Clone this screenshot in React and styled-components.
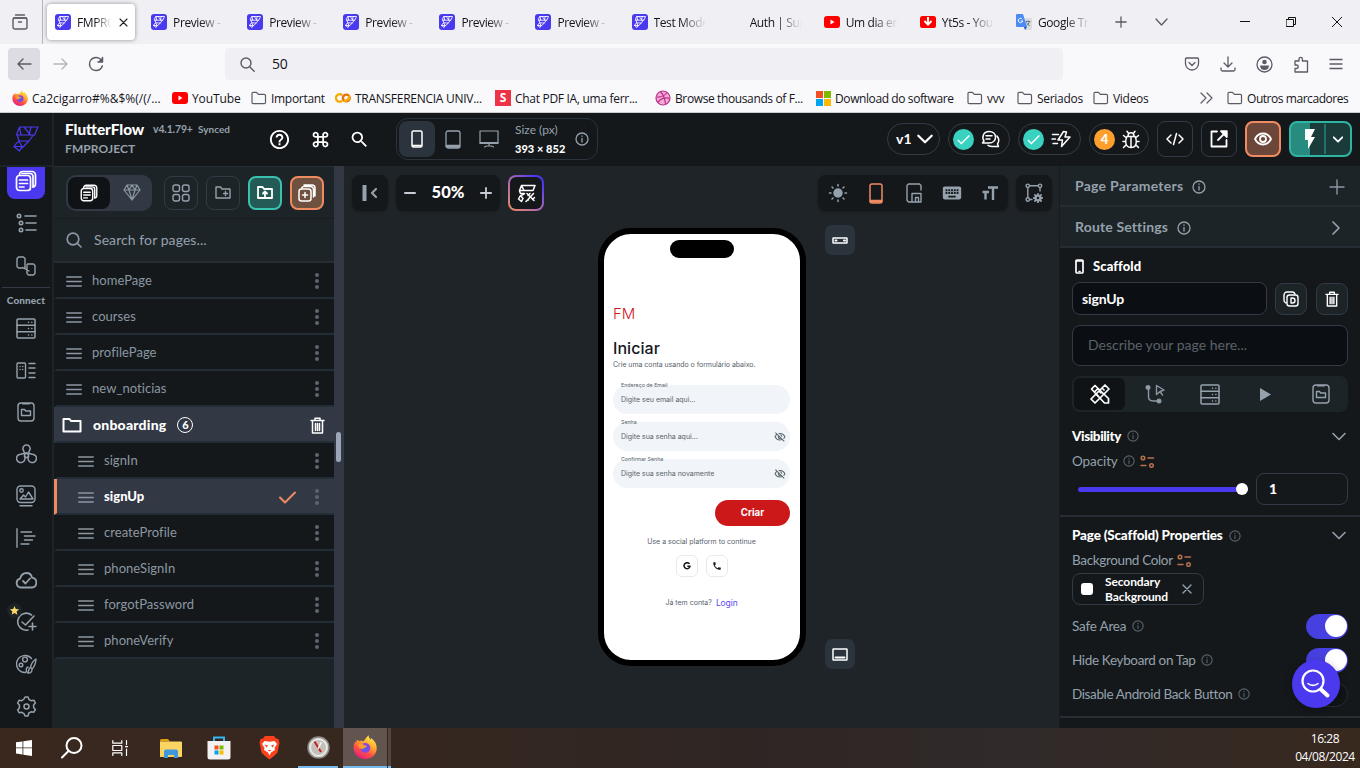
import React from "react";
import styled, { createGlobalStyle, css } from "styled-components";
import {
  MdSearch, MdHelpOutline, MdKeyboardCommandKey, MdKeyboard, MdPhone,
  MdOutlineVisibilityOff, MdCheck, MdFlashOn, MdStar,
} from "react-icons/md";

const ui = `"Open Sans", "Noto Sans", sans-serif`;
const app = `Lato, "Open Sans", sans-serif`;
const mobile = `Inter, Roboto, sans-serif`;

const c = {
  ink: "#14181b",
  panel: "#1d2428",
  line: "#262d34",
  edge: "#323b45",
  slate: "#323945",
  grey: "#95a1ac",
  dim: "#57636c",
  violet: "#4b39ef",
  orange: "#ee8b60",
  teal: "#39d2c0",
};

const Global = createGlobalStyle`
  * { box-sizing: border-box; }
  body { margin: 0; overflow: hidden; font-family: ${app}; }
  svg { display: block; flex: none; }
`;

const Screen = styled.div`
  width: 1360px;
  height: 768px;
  display: flex;
  flex-direction: column;
  overflow: hidden;
  background: ${c.ink};
`;

const Label = styled.span`
  width: ${(p) => (p.$w ? p.$w + "px" : "auto")};
  font-family: ${(p) => p.$family || app};
  font-size: ${(p) => p.$size || 13}px;
  font-weight: ${(p) => p.$weight || 400};
  color: ${(p) => p.$color || c.grey};
  letter-spacing: ${(p) => p.$track || 0}px;
  line-height: ${(p) => p.$lh || 1.2};
  white-space: nowrap;
`;

/* Stroked drawing on its own grid; every icon below is built on it. */
function Draw({ w = 20, h, box, color = c.grey, sw = 1.5, children }) {
  const hh = h || w;
  return (
    <svg width={w} height={hh} viewBox={box || `0 0 ${w} ${hh}`} fill="none" stroke={color}
      strokeWidth={sw} strokeLinecap="round" strokeLinejoin="round">
      {children}
    </svg>
  );
}

const Info = ({ s = 12, color = c.dim }) => (
  <Draw w={s} box="0 0 14 14" color={color} sw={1.3}>
    <circle cx="7" cy="7" r="6" /><path d="M7 6.4v3.6M7 4v.3" />
  </Draw>
);
const Chevron = ({ w = 14, color = c.grey, sw = 1.6 }) => (
  <Draw w={w} h={w / 2 + 2} box="0 0 14 9" color={color} sw={sw}><path d="M1 1.5l6 6 6-6" /></Draw>
);

/* ---------- browser ---------- */
const TabStrip = styled.div`
  height: 44px;
  flex: none;
  display: flex;
  background: #f0f0f4;
`;
const RecentButton = styled.div`
  width: 43px;
  padding-right: 3px;
  border-right: 1px solid #b5b5bb;
  display: flex;
  align-items: center;
  justify-content: center;
`;
const Tab = styled.div`
  width: 96.1px;
  padding: 4px;
  flex: none;
`;
const TabBody = styled.div`
  height: 36px;
  display: flex;
  align-items: center;
  gap: 6px;
  padding-left: 8px;
  border-radius: 4px;
  ${(p) => p.$active && css`
    background: #fff;
    box-shadow: 0 0 4px rgba(0, 0, 0, 0.4);
  `}
`;
const TabTitle = styled.span`
  width: ${(p) => (p.$short ? 36 : 54)}px;
  overflow: hidden;
  white-space: nowrap;
  font: 12px ${ui};
  letter-spacing: -0.4px;
  color: #15141a;
  mask-image: linear-gradient(to right, #000 50%, transparent 96%);
`;
const Slot = styled.div`
  width: 16px;
  height: 16px;
  flex: none;
  display: grid;
  place-items: center;
`;
const TabTools = styled.div`
  flex: 1;
  display: flex;
  align-items: center;
  gap: 28px;
  padding-left: 15px;
`;
const WindowButtons = styled.div`
  margin-left: auto;
  margin-right: 18px;
  display: flex;
  align-items: center;
  gap: 36px;
`;
const NavBar = styled.div`
  height: 40px;
  flex: none;
  background: #f9f9fb;
  display: flex;
  align-items: center;
  padding: 0 17px 0 8px;
`;
const NavButton = styled.div`
  width: 32px;
  height: 32px;
  margin-right: 4px;
  border-radius: 4px;
  display: grid;
  place-items: center;
  background: ${(p) => (p.$on ? "#dcdce2" : "transparent")};
`;
const UrlBox = styled.div`
  width: 838px;
  height: 32px;
  margin-left: 109px;
  border-radius: 4px;
  background: #f0f0f4;
  display: flex;
  align-items: center;
  gap: 17px;
  padding-left: 15px;
`;
const NavTools = styled.div`
  margin-left: auto;
  display: flex;
  align-items: center;
  gap: 20.3px;
`;
const BookmarkBar = styled.div`
  height: 29px;
  flex: none;
  background: #f9f9fb;
  border-bottom: 1px solid #cccccf;
  display: flex;
  align-items: center;
  padding: 0 12px 0 12px;
`;
const Bookmark = styled.div`
  width: ${(p) => (p.$w ? p.$w + "px" : "auto")};
  flex: none;
  display: flex;
  align-items: center;
  gap: 4px;
`;
const BookmarkText = styled.span`
  font: 12px ${ui};
  letter-spacing: ${(p) => p.$track ?? -0.3}px;
  color: #15141a;
  white-space: nowrap;
`;

const FlowMark = ({ color = "#fff", w = 12 }) => (
  <Draw w={w} box="-1 -1 26 26" color={color} sw={w < 16 ? 1.9 : 1.2}>
    <path d="M5.500 0H24l-3.500 8H2.500zM10 0l6.500 8M5.500 0L7 8M17 0l-2 8M3.500 8.500L5 14h10l4-5.500M3 15.500l-3 4L5.500 24 8 19.500 5 14.500zM14.500 14.500L8 21M0 19.500l8 0" />
  </Draw>
);
const FlowTile = styled.div`
  width: 16px;
  height: 16px;
  border-radius: 3px;
  background: #4b39ef;
  display: grid;
  place-items: center;
`;
const FlowIcon = () => <FlowTile><FlowMark /></FlowTile>;
const YouTube = () => (
  <svg width="16" height="12" viewBox="0 0 16 12"><rect width="16" height="12" rx="3" fill="#f00" /><path d="M6.500 3.500v5l4-2.500z" fill="#fff" /></svg>
);
const Yt5s = () => (
  <svg width="16" height="12" viewBox="0 0 16 12"><rect width="16" height="12" rx="2.500" fill="#f00" /><path d="M8 1v6M4.500 5L8 8.500 11.500 5" stroke="#fff" strokeWidth="2" fill="none" /></svg>
);
const Translate = () => (
  <svg width="16" height="16" viewBox="0 0 16 16">
    <path d="M6 4h9a1 1 0 011 1v10a1 1 0 01-1 1H9z" fill="#dadce0" />
    <path d="M9.500 7.500h5M12 6.500v1M13.500 7.500c-.5 2-2 3.500-3 4M10.500 8.500c.7 1.500 2 2.700 3.200 3.200" stroke="#607988" fill="none" />
    <path d="M1 0h6l4 13H1a1 1 0 01-1-1V1a1 1 0 011-1z" fill="#4c8bf5" />
    <path d="M8 13h3l-2 3z" fill="#1a56c4" />
    <path d="M6.300 5.200A2.200 2.200 0 106.700 7H4.800" stroke="#fff" fill="none" />
  </svg>
);
const Firefox = ({ s = 16 }) => (
  <svg width={s} height={s} viewBox="0 0 24 24">
    <defs>
      <linearGradient id={"fx" + s} x1="0.8" y1="0" x2="0.25" y2="1">
        <stop offset="0" stopColor="#fff44f" /><stop offset="0.35" stopColor="#ffb02e" />
        <stop offset="0.65" stopColor="#ff5540" /><stop offset="1" stopColor="#e31587" />
      </linearGradient>
      <radialGradient id={"fp" + s}><stop offset="0.3" stopColor="#5b5bea" /><stop offset="1" stopColor="#9b3fd8" /></radialGradient>
    </defs>
    <path d="M4 5c1 0 1.500.5 2 1.200C8 5.500 9.500 5.800 10.500 6.200 12 5 13 2.500 15.500.3c.2 2 1 3 2.500 4.500 0-1 0-1.500-.2-2C22 6 24 9.500 23.700 14 23.300 20 18.200 24 12.500 24 6 24 .5 19.500.5 12.500.5 10 1.500 7.500 2.800 6L3 8z" fill={`url(#fx${s})`} />
    <circle cx="12.300" cy="13" r="5" fill={`url(#fp${s})`} />
    <path d="M5 10c2-2.500 4.500-1.500 6 .2 1.500.3 2.500.3 3 .8-1 2-3 1.500-4 3-2.500 0-4.500-1-5-4z" fill="#ff9a2e" />
  </svg>
);
const Folder = () => (
  <Draw w={16} h={14} color="#5b5b66" sw={1.2}><path d="M1 11.500V2.300a1 1 0 011-1h3.500l1.800 2h6a1.200 1.200 0 011.200 1.200v7a1.200 1.200 0 01-1.200 1.200H2.200A1.200 1.200 0 011 11.500z" /></Draw>
);
const Colab = () => (
  <svg width="16" height="12" viewBox="0 0 16 12" fill="none" strokeWidth="2.400">
    <path d="M7.200 3.300a3.700 3.700 0 100 5.400" stroke="#f9ab00" /><circle cx="11.300" cy="6" r="3.400" stroke="#e8710a" /><path d="M8.700 8.400a3.700 3.700 0 005-4.700" stroke="#f9ab00" />
  </svg>
);
const LetterTile = styled.div`
  width: 16px;
  height: 16px;
  background: #ef3347;
  color: #fff;
  font: 700 12px/16px ${ui};
  text-align: center;
`;
const Dribbble = () => (
  <svg width="16" height="16" viewBox="0 0 16 16" fill="#f5a9d8" stroke="#b8358a" strokeWidth="1.200">
    <circle cx="8" cy="8" r="7" /><path fill="none" d="M1.500 7c4 .3 8-1 10.500-4.500M5.500 1.500c3 3.500 4.500 7.500 5 12.500M3 12.500C5 8.500 10 7 14.800 8.500" />
  </svg>
);
const FourSquares = ({ s = 15 }) => (
  <svg width={s} height={s} viewBox="0 0 15 15">
    <rect width="7" height="7" fill="#f25022" /><rect x="8" width="7" height="7" fill="#7fba00" />
    <rect y="8" width="7" height="7" fill="#00a4ef" /><rect x="8" y="8" width="7" height="7" fill="#ffb900" />
  </svg>
);

const tabs = [
  ["FMPROJ", FlowIcon], ["Preview -", FlowIcon], ["Preview -", FlowIcon], ["Preview -", FlowIcon],
  ["Preview -", FlowIcon], ["Preview - I", FlowIcon], ["Test Mode", FlowIcon], ["Auth | Sup", null],
  ["Um dia em", YouTube], ["Yt5s - You", Yt5s], ["Google Tra", Translate],
];
const marks = [
  ["Ca2cigarro#%&$%(/(/...", Firefox, 160, 0], ["YouTube", YouTube, 79, -0.1], ["Important", Folder, 84],
  ["TRANSFERENCIA UNIV...", Colab, 160, -0.27], ["Chat PDF IA, uma ferr...", () => <LetterTile>S</LetterTile>, 160, -0.3],
  ["Browse thousands of F...", Dribbble, 160, -0.38], ["Download do software", FourSquares, 152, -0.4],
  ["vvv", Folder, 50, -0.3], ["Seriados", Folder, 76], ["Videos", Folder, 106],
];

function Browser() {
  const g = "#5b5b66";
  return (
    <>
      <TabStrip>
        <RecentButton>
          <Draw w={16} color={g} sw={1.4}><path d="M3.500 1h9" /><path d="M1.500 4h13" /><rect x="1" y="4" width="14" height="11" rx="2" /><path d="M6.500 8h3" /></Draw>
        </RecentButton>
        {tabs.map(([title, Icon], i) => (
          <Tab key={i}>
            <TabBody $active={i === 0}>
              <Slot>{Icon && <Icon />}</Slot>
              <TabTitle $short={i === 0}>{title}</TabTitle>
              {i === 0 && <Draw w={9} color="#222" sw={1.1}><path d="M1 1l7 7M8 1L1 8" /></Draw>}
            </TabBody>
          </Tab>
        ))}
        <TabTools>
          <Draw w={12} color={g} sw={1.3}><path d="M6 .8v10.400M.8 6h10.400" /></Draw>
          <Draw w={13} h={8} color={g} sw={1.3}><path d="M1 1l5.500 6L12 1" /></Draw>
          <WindowButtons>
            <Draw w={10} h={10} color="#111" sw={1}><path d="M0 4.500h10" /></Draw>
            <Draw w={10} h={10} color="#111" sw={1}><path d="M.5 2.500h7v7h-7zM2.500 2.500v-2h7v7h-2" /></Draw>
            <Draw w={10} h={10} color="#111" sw={1}><path d="M0 0l10 10M10 0L0 10" /></Draw>
          </WindowButtons>
        </TabTools>
      </TabStrip>
      <NavBar>
        <NavButton $on><Draw w={15} h={12} color={g} sw={1.4}><path d="M1 6h13M6 1L1 6l5 5" /></Draw></NavButton>
        <NavButton><Draw w={15} h={12} color="#b5b5bb" sw={1.4}><path d="M1 6h13M9 1l5 5-5 5" /></Draw></NavButton>
        <NavButton><Draw w={16} color={g} sw={1.5}><path d="M14 5.500A6.500 6.500 0 108 14.500c3 0 5.500-2 6.300-4.500" /><path d="M14.500 1.500v4.500H10" fill={g} /></Draw></NavButton>
        <UrlBox>
          <Draw w={15} color={g} sw={1.4}><circle cx="6" cy="6" r="5" /><path d="M9.700 9.700l4.500 4.500" /></Draw>
          <Label $family={ui} $size={14} $color="#15141a" $track={-0.3}>50</Label>
        </UrlBox>
        <NavTools>
          <Draw w={16} color={g} sw={1.3}><path d="M1.500 3a1 1 0 011-1h11a1 1 0 011 1v4.500a6.500 6.500 0 01-13 0z" /><path d="M5 6.500l3 3 3-3" /></Draw>
          <Draw w={16} color={g} sw={1.3}><path d="M8 .8v10M4 7l4 4 4-4M1 12v1.500a1.500 1.500 0 001.500 1.500h11a1.500 1.500 0 001.500-1.500V12" /></Draw>
          <Draw w={17} color={g} sw={1.3}><circle cx="8.500" cy="8.500" r="7.500" /><circle cx="8.500" cy="6" r="2.300" fill={g} stroke="none" /><path fill={g} stroke="none" d="M4 9.500h9c0 3-2 4.500-4.500 4.500S4 12.500 4 9.500z" /></Draw>
          <Draw w={15} h={17} color={g} sw={1.3}><path d="M1 5h4V3a1.700 1.700 0 013.400 0v2H13.500v11H1v-3.500h1.500a1.700 1.700 0 000-3.500H1z" /></Draw>
          <Draw w={14} h={12} color={g} sw={1.3}><path d="M1 1.500h12M1 6h12M1 10.500h12" /></Draw>
        </NavTools>
      </NavBar>
      <BookmarkBar>
        {marks.map(([text, Icon, w, track]) => (
          <Bookmark key={text} $w={w}><Slot><Icon /></Slot><BookmarkText $track={track}>{text}</BookmarkText></Bookmark>
        ))}
        <Bookmark $w={28}><Draw w={14} h={12} color={g} sw={1.2}><path d="M2 1l5 5-5 5M8 1l5 5-5 5" /></Draw></Bookmark>
        <Bookmark><Slot><Folder /></Slot><BookmarkText $track={-0.45}>Outros marcadores</BookmarkText></Bookmark>
      </BookmarkBar>
    </>
  );
}

/* ---------- builder header ---------- */
const Header = styled.header`
  height: 53px;
  flex: none;
  display: flex;
  align-items: center;
  padding-bottom: 1px;
  background: ${c.ink};
`;
const LogoCell = styled.div`
  width: 54px;
  height: 53px;
  padding-bottom: 0;
  border-right: 2px solid ${c.panel};
  border-bottom: 1px solid ${c.panel};
  display: grid;
  place-items: center;
`;
const Title = styled.div`
  width: 205px;
  padding-left: 11px;
  display: flex;
  flex-direction: column;
  gap: 3px;
`;
const TitleRow = styled.div`
  display: flex;
  align-items: center;
  height: 17px;
`;
const HeaderIcons = styled.div`
  display: flex;
  align-items: center;
  gap: 18.500px;
  width: 127px;
  padding-left: 9px;
  color: #fff;
`;
const DeviceBox = styled.div`
  width: 202px;
  height: 42px;
  border: 1px solid #2b343c;
  border-radius: 12px;
  display: flex;
  align-items: center;
  padding-left: 2px;
  margin-left: 10px;
`;
const Device = styled.div`
  width: 36px;
  height: 36px;
  border-radius: 8px;
  display: grid;
  place-items: center;
  background: ${(p) => (p.$on ? "#2b343c" : "transparent")};
`;
const SizeText = styled.div`
  width: 60px;
  margin-left: 8px;
  display: flex;
  flex-direction: column;
  gap: 4px;
`;
const Actions = styled.div`
  margin-left: auto;
  margin-right: 8px;
  display: flex;
  align-items: center;
  gap: 8px;
`;
const Pill = styled.div`
  width: ${(p) => p.$w}px;
  height: 32px;
  border: 1px solid ${c.edge};
  border-radius: 16px;
  display: flex;
  align-items: center;
  padding-left: ${(p) => p.$pad ?? 4}px;
  gap: ${(p) => p.$gap ?? 6.5}px;
`;
const Dot = styled.div`
  width: 21px;
  height: 21px;
  border-radius: 50%;
  background: ${(p) => p.$bg};
  color: #fff;
  font: 900 13px/21px ${app};
  display: grid;
  place-items: center;
`;
const Square = styled.div`
  width: ${(p) => p.$w || 36}px;
  height: ${(p) => p.$w || 36}px;
  border: ${(p) => (p.$accent ? 2 : 1)}px solid ${(p) => p.$line || c.edge};
  border-radius: 8px;
  background: ${(p) => p.$bg || "transparent"};
  display: grid;
  place-items: center;
  color: #fff;
`;
const RunButton = styled.div`
  width: 63px;
  height: 36px;
  border: 2px solid #2fb5a4;
  border-radius: 8px;
  background: linear-gradient(to right, #288b7f 19px, #1b3a3a 19px);
  display: flex;
  align-items: center;
  color: #fff;
`;
const RunHalf = styled.div`
  width: ${(p) => p.$w}px;
  height: 30px;
  padding-left: ${(p) => p.$pad || 0}px;
  display: grid;
  place-items: center;
  border-right: ${(p) => (p.$split ? "2px solid #22746b" : "0")};
`;

function TopHeader() {
  return (
    <Header>
      <LogoCell><FlowMark color="#4b39ef" w={26} /></LogoCell>
      <Title>
        <TitleRow>
          <Label $size={15.3} $weight={900} $color="#fff" $w={88}>FlutterFlow</Label>
          <Label $size={10.5} $weight={700} $track={-0.15} $w={45}>v4.1.79+</Label>
          <Label $size={10} $weight={700}>Synced</Label>
        </TitleRow>
        <TitleRow><Label $size={12} $weight={700} $track={0.1}>FMPROJECT</Label></TitleRow>
      </Title>
      <HeaderIcons><MdHelpOutline size={23} /><MdKeyboardCommandKey size={21} /><MdSearch size={21} /></HeaderIcons>
      <DeviceBox>
        <Device $on><Draw w={12} h={18} color="#fff"><rect x="1" y="1" width="10" height="16" rx="1.500" /><path d="M1.500 15.500h9" sw={2} /></Draw></Device>
        <Device><Draw w={16} h={19} color={c.grey} sw={1.3}><rect x="1" y="1" width="14" height="17" rx="2" /><path d="M1.500 15.500h13v1.500h-13z" fill={c.grey} /></Draw></Device>
        <Device><Draw w={20} h={18} color={c.grey} sw={1.2}><rect x="1" y="1" width="18" height="12.500" /><path d="M1 12.500h18M10 13.500v2M5.500 17l2-1h5l2 1" /></Draw></Device>
        <SizeText>
          <Label $size={12}>Size (px)</Label>
          <Label $size={11} $weight={900} $color="#fff" $track={0.05}>393 × 852</Label>
        </SizeText>
        <Info s={14} color={c.grey} />
      </DeviceBox>
      <Actions>
        <Pill $w={53} $pad={8} $gap={5}><Label $size={14} $color="#fff" $weight={700}>v1</Label><Chevron w={16} color="#fff" sw={2} /></Pill>
        <Pill $w={62}>
          <Dot $bg={c.teal}><MdCheck size={17} /></Dot>
          <Draw w={19} color="#fff"><path d="M8 1.500c4 0 6.500 2.500 6.500 5.700S12 13 8 13H1.500L3 11C.5 7 2.500 1.500 8 1.500zM5 5.700h6M5 9h4" /><path d="M16 6c2.500 3 1.500 6.500.5 8l1 2.500H12c-2 .1-3.700-.4-5-1.200" /></Draw>
        </Pill>
        <Pill $w={63}>
          <Dot $bg={c.teal}><MdCheck size={17} /></Dot>
          <Draw w={20} h={18} color="#fff"><path d="M12.500 1.500L7 10h4.500L10.500 16.500 19 7h-5l1.500-5zM1.500 4.500h6M1 9h3.500M2 13.500h4.500" /></Draw>
        </Pill>
        <Pill $w={60}>
          <Dot $bg="#ff9f2e">4</Dot>
          <Draw w={18} h={19} color="#fff"><path d="M5 6.500h8c1 1.500 1.300 3 1.300 5 0 4-2.300 6-5.300 6s-5.300-2-5.300-6c0-2 .3-3.500 1.300-5zM9 7v10M6 6.500C6 1.500 12 1.500 12 6.500M6.300 3L5 1.300M11.700 3L13 1.300M1 11.500h2.700M14.300 11.500H17M4 7.500L1.500 5.500M14 7.500l2.500-2M4 15l-2.500 2.500M14 15l2.500 2.500" /></Draw>
        </Pill>
        <Square><Draw w={18} h={14} color="#fff"><path d="M5 3L1 7l4 4M13 3l4 4-4 4M10.500 1.500l-3 11" /></Draw></Square>
        <Square><Draw w={18} color="#fff" sw={1.8}><path d="M7 1.500H1.500v15h15V10" /><path d="M8 10l8-8" /><path d="M11 1.200h5.800V7z" fill="#fff" /></Draw></Square>
        <Square $accent $line="#ee8b60" $bg="#6b4639"><Draw w={18} h={14} color="#fff" sw={1.8}><path d="M1 7c2-4 5-5.500 8-5.500S15 3 17 7c-2 4-5 5.500-8 5.500S3 11 1 7z" /><circle cx="9" cy="7" r="3" /></Draw></Square>
        <RunButton><RunHalf $w={35} $pad={4} $split><MdFlashOn size={24} /></RunHalf><RunHalf $w={24}><Chevron w={10} color="#fff" sw={2.6} /></RunHalf></RunButton>
      </Actions>
    </Header>
  );
}

/* ---------- rail ---------- */
const Work = styled.div`
  height: 562px;
  flex: none;
  display: flex;
  overflow: hidden;
`;
const Rail = styled.nav`
  width: 52px;
  flex: none;
  background: ${c.ink};
  border-top: 1px solid ${c.panel};
  display: flex;
  flex-direction: column;
  align-items: center;
`;
const RailActive = styled.div`
  width: 38px;
  height: 32px;
  flex: none;
  border-radius: 0 0 8px 8px;
  background: ${c.violet};
  display: flex;
  justify-content: center;
  padding-top: 3px;
`;
const RailItem = styled.div`
  height: ${(p) => p.$h || 42}px;
  width: 52px;
  flex: none;
  position: relative;
  display: grid;
  place-items: center;
`;
const RailHead = styled.div`
  width: 48px;
  height: 20px;
  flex: none;
  margin-top: 2px;
  border-top: 1px solid ${c.edge};
  padding-top: 4px;
  text-align: center;
  line-height: 12px;
`;
const StarBadge = styled.div`
  position: absolute;
  left: 7px;
  top: 2px;
  width: 15px;
  height: 15px;
  border-radius: 50%;
  background: ${c.panel};
  color: #ffd866;
  display: grid;
  place-items: center;
`;

const PagesIcon = ({ w = 22, color = "#fff" }) => (
  <Draw w={w} box="0 0 22 22" color={color} sw={1.7}>
    <rect x="1.500" y="5.500" width="14" height="15" rx="3" /><path d="M4.500 5V4.500a3 3 0 013-3H17a3.500 3.500 0 013.500 3.500v9a3 3 0 01-2.500 3M4.500 10h8M4.500 13.500h8M4.500 17h4.500" /><path d="M7 3.500h8a3 3 0 013 3V17" />
  </Draw>
);
const DbIcon = () => (
  <Draw w={20} h={21}><rect x="1" y="1" width="18" height="19" rx="1" /><path d="M1 7.300h18M1 13.700h18M12.500 4.200h.1M15.800 4.200h.1M12.500 10.500h.1M15.800 10.500h.1M12.500 17h.1M15.800 17h.1" /></Draw>
);
const StorageIcon = () => (
  <Draw w={18} h={20} sw={1.4}><rect x="1" y="1" width="16" height="18" rx="3" /><path d="M5.500 1.800h7M4.500 13.500V7.500H7.500l1.200 1.500h4.800v4.500z" /></Draw>
);

const railIcons = [
  <DbIcon />,
  <Draw w={20} h={17} sw={1.4}><rect x="1" y="1" width="8.500" height="15" rx="1" /><path d="M4 4.500h.1M6.700 4.500h.1M4 7.500h.1M6.700 7.500h.1M13 1.500h6M13 6h6M13 11h6M13 15.500h6" /></Draw>,
  <StorageIcon />,
  <Draw w={21} h={21}><path d="M10.500 1a3.500 3.500 0 013 5.500L12.500 9h-4l-1-2.500A3.500 3.500 0 0110.500 1z" /><circle cx="10.500" cy="11.500" r="2" /><path d="M8.500 12.500a4.200 4.200 0 11-4-2.300l3.500-.7M12.500 12.500a4.200 4.200 0 104-2.300l-3.500-.7" /></Draw>,
  <Draw w={20} h={22} sw={1.4}><rect x="1" y="1" width="18" height="16.500" rx="3.500" /><circle cx="5.500" cy="5.500" r="1.700" /><path d="M4 14l3.500-4 2 2L12.500 7 17 14zM4 20.700h12" /></Draw>,
  <Draw w={20} h={20} sw={1.4}><path d="M1 .8v18.500M5 4h10.500M8.500 8h10.500M8.500 12h8M5 16h8" /></Draw>,
  <Draw w={22} h={17} sw={1.8}><path d="M5.500 15.500a4.500 4.500 0 01-.5-8.800C6.300 2.500 9 1 11.500 1c3 0 5 2 5.500 4.700 6 .7 5.500 9.300 0 9.800zM8 9l2.500 2.500L15 6.500" /></Draw>,
  <Draw w={21} h={20} sw={1.6}><path d="M15.500 3A8.500 8.500 0 1012 18M6 10l3.500 3L18 4M16.500 11v7M13 14.500h7" /></Draw>,
  <Draw w={21} h={20} sw={1.4}><path d="M15.500 4.500A8.500 8.500 0 109.500 18.500c1.500-.5 1-2 .7-3 0-1 .8-2 1.800-2.500" /><circle cx="9" cy="5.500" r="2.400" /><circle cx="5" cy="11" r="1.800" /><path d="M20 5c-3 2-5 5-5.500 8.500l1.800 1.300C18.500 12.500 19.700 9 20 5zM14 14c-1.500.5-1 3.500-2.500 4.800 2.500.7 4.800-.8 4.500-3.500" /></Draw>,
  <Draw w={21} h={21}><path d="M8 3l1-2h3l1 2.500 2 1.200 2.800-.5 1.600 2.600-1.800 2.200v2.500l1.800 2-1.600 2.700-2.700-.4-2.300 1.200L12 20H9l-1-2.400-2.200-1.300-2.700.4-1.500-2.700 1.800-2V9L1.600 7l1.500-2.700 2.700.4z" /><circle cx="10.500" cy="10.500" r="2.500" /></Draw>,
];

function SideRail() {
  return (
    <Rail>
      <RailActive><PagesIcon /></RailActive>
      <RailItem $h={48}>
        <Draw w={21} h={20} sw={1.6}><circle cx="3" cy="3" r="1.700" /><circle cx="5" cy="10" r="1.700" /><circle cx="5" cy="17" r="1.700" /><path d="M9 3h11M10 10h10M10 17h10" /></Draw>
      </RailItem>
      <RailItem $h={38}>
        <Draw w={20} h={20} sw={1.4}><path d="M7 12H2.500L1 10.500V2.500L2.500 1h5L9 2.500V12zM6.500 11.500L13 15M11.500 8h6L19 9.500v8L17.500 19h-5L11 17.500V8.500z" /></Draw>
      </RailItem>
      <RailHead><Label $size={10} $weight={900} $lh={1} $track={0.1}>Connect</Label></RailHead>
      {railIcons.map((icon, i) => (
        <RailItem key={i}>{icon}{i === 7 && <StarBadge><MdStar size={11} /></StarBadge>}</RailItem>
      ))}
    </Rail>
  );
}

/* ---------- page list ---------- */
const Pages = styled.aside`
  width: 282px;
  flex: none;
  border-left: 2px solid ${c.panel};
  border-top: 1px solid ${c.line};
  background: ${c.panel};
  display: flex;
  flex-direction: column;
`;
const PageTools = styled.div`
  height: 52px;
  border-bottom: 1px solid #171c1f;
  display: flex;
  align-items: center;
  gap: 8px;
  padding-left: 12px;
`;
const Switcher = styled.div`
  width: 86px;
  height: 36px;
  margin-right: 4px;
  border-radius: 10px;
  border: 2px solid ${c.slate};
  background: ${c.slate};
  display: flex;
`;
const Option = styled.div`
  width: ${(p) => (p.$on ? 42 : 43)}px;
  flex: none;
  border-radius: 8px;
  display: grid;
  place-items: center;
  background: ${(p) => (p.$on ? "#101315" : "transparent")};
`;
const SearchRow = styled.div`
  height: 44px;
  border-bottom: 2px solid ${c.line};
  display: flex;
  align-items: center;
  padding-left: 12px;
  gap: 12px;
`;
const Row = styled.div`
  height: 36px;
  flex: none;
  display: flex;
  align-items: center;
  background: ${(p) => (p.$lit ? c.slate : c.ink)};
  border-bottom: 2px solid #242d35;
  border-left: 3px solid ${(p) => (p.$current ? c.orange : p.$lit ? c.slate : c.ink)};
  padding: 2px ${(p) => (p.$folder ? 9 : 14)}px 0 ${(p) => (p.$folder ? 5 : p.$sub ? 21 : 9)}px;
  gap: ${(p) => (p.$folder ? 11 : 10)}px;
`;
const RowEnd = styled.div`
  margin-left: auto;
  display: flex;
  align-items: center;
  gap: 18px;
`;
const Count = styled.span`
  width: 16px;
  height: 16px;
  border: 1px solid #fff;
  border-radius: 50%;
  font: 900 11px/14px ${app};
  text-align: center;
  color: #fff;
`;
const Gutter = styled.div`
  width: 10px;
  flex: none;
  background: ${c.slate};
  padding: 266px 3px 0 2px;
`;
const Thumb = styled.div`
  height: 30px;
  border-radius: 3px;
  background: #9aa6b8;
`;

const Lines = () => <Draw w={16} h={11} color="#8b97a2" sw={1.6}><path d="M.8 1h14.400M.8 5.500h14.400M.8 10h14.400" /></Draw>;
const Dots = () => (
  <svg width="6" height="16" viewBox="0 0 6 16" fill="#5c6670"><circle cx="3" cy="2" r="2" /><circle cx="3" cy="8" r="2" /><circle cx="3" cy="14" r="2" /></svg>
);
const Trash = ({ w = 15 }) => (
  <Draw w={w} h={w + 2} box="0 0 15 17" color="#fff" sw={1.5}><path d="M1 3.500h13M5 3V1.200h5V3M2.500 4v12h10V4M5.500 6.500v7M7.500 6.500v7M9.500 6.500v7" /></Draw>
);

const pages = [
  { name: "homePage" }, { name: "courses" }, { name: "profilePage" }, { name: "new_noticias" },
  { name: "onboarding", folder: true },
  { name: "signIn", sub: true }, { name: "signUp", sub: true, current: true }, { name: "createProfile", sub: true },
  { name: "phoneSignIn", sub: true }, { name: "forgotPassword", sub: true }, { name: "phoneVerify", sub: true },
];

function PageList() {
  return (
    <>
      <Pages>
        <PageTools>
          <Switcher>
            <Option $on><PagesIcon w={18} /></Option>
            <Option><Draw w={18} h={17} color="#8b97a2" sw={1.2}><path d="M4 1h10l3 5-8 10L1 6zM1 6h16M6 6l3 10 3-10M4 1l2 5 3-5 3 5 2-5" /></Draw></Option>
          </Switcher>
          <Square $w={34}><Draw w={18} color={c.grey} sw={1.4}><rect x="1" y="1" width="6.500" height="6.500" rx="2" /><rect x="10.500" y="1" width="6.500" height="6.500" rx="2" /><rect x="1" y="10.500" width="6.500" height="6.500" rx="2" /><rect x="10.500" y="10.500" width="6.500" height="6.500" rx="2" /></Draw></Square>
          <Square $w={34}><Draw w={16} h={13} sw={1.4}><path d="M1 1h4.500L7 3h8v9H1zM10.500 5.500v4M8.500 7.500h4" /></Draw></Square>
          <Square $w={34} $accent $line="#39c2b0" $bg="#245b56"><Draw w={16} h={13} color="#fff" sw={1.8}><path d="M1 1h4.500L7 3h8v9H1zM8 10.500V6M6 7.500L8 5.500l2 2" /></Draw></Square>
          <Square $w={34} $accent $line={c.orange} $bg="#70503f"><Draw w={18} color="#fff" sw={1.5}><rect x="1" y="5" width="12" height="12" rx="2.500" /><path d="M3.500 4.500a2.500 2.500 0 012.500-2h6.500A3 3 0 0115.500 5.500V13M6 1h8a3 3 0 013 3v8M7 8.500v5M4.500 11h5" /></Draw></Square>
        </PageTools>
        <SearchRow>
          <Draw w={16} color="#8b97a2" sw={1.7}><circle cx="7" cy="7" r="5.800" /><path d="M11.300 11.300L15 15" /></Draw>
          <Label $size={14} $color="#95a1ac" $track={0.08}>Search for pages...</Label>
        </SearchRow>
        {pages.map((p) => (
          <Row key={p.name} $lit={p.folder || p.current} $current={p.current} $sub={p.sub} $folder={p.folder}>
            {p.folder ? (
              <Draw w={20} h={16} color="#fff" sw={2}><path d="M1.500 2h6l1.500 2h9.500v10.500h-17z" /></Draw>
            ) : <Lines />}
            <Label $size={p.folder ? 14 : 13} $weight={p.folder || p.current ? 900 : 400} $color={p.folder || p.current ? "#fff" : "#8b97a2"} $track={p.folder ? 0.2 : 0.05}>{p.name}</Label>
            {p.folder && <Count>6</Count>}
            <RowEnd>
              {p.current && <Draw w={17} h={13} color={c.orange} sw={2}><path d="M1 6.500L6 11.500 16 1.500" /></Draw>}
              {p.folder ? <Trash /> : <Dots />}
            </RowEnd>
          </Row>
        ))}
      </Pages>
      <Gutter><Thumb /></Gutter>
    </>
  );
}

/* ---------- canvas ---------- */
const Canvas = styled.main`
  width: 715px;
  flex: none;
  background: #1f2428;
  padding: 9px 7px 0 8px;
  display: flex;
  flex-direction: column;
`;
const CanvasBar = styled.div`
  display: flex;
  gap: 8px;
  height: 36px;
  flex: none;
`;
const Chunk = styled.div`
  width: ${(p) => p.$w}px;
  height: 36px;
  border-radius: 8px;
  background: ${c.ink};
  box-shadow: 0 1px 3px rgba(0, 0, 0, 0.25);
  display: flex;
  align-items: center;
  justify-content: ${(p) => p.$spread || "center"};
  padding: 0 ${(p) => p.$pad || 0}px;
`;
const ToolCell = styled.div`
  width: 38px;
  padding-left: 1px;
  display: grid;
  place-items: center;
`;
const GlowButton = styled.div`
  width: 36px;
  height: 36px;
  border: 2px solid transparent;
  border-radius: 8px;
  background: linear-gradient(${c.ink}, ${c.ink}) padding-box, linear-gradient(45deg, #ee8b60, #9b62c0 55%, #4b39ef 85%) border-box;
  display: grid;
  place-items: center;
`;
const Grow = styled.div`
  flex: 1;
`;
const Stage = styled.div`
  display: flex;
  padding: 14px 0 0 246px;
  gap: 19px;
`;
const SideButtons = styled.div`
  height: 444px;
  display: flex;
  flex-direction: column;
  justify-content: space-between;
`;
const SideButton = styled.div`
  width: 30px;
  height: 30px;
  border-radius: 7px;
  background: #2b343c;
  display: grid;
  place-items: center;
`;
const Phone = styled.div`
  width: 208px;
  height: 438px;
  margin-top: 3px;
  border: 6px solid #000;
  border-radius: 33px;
  background: #fff;
  display: flex;
  flex-direction: column;
  padding: 6px 10px 0 9px;
`;
const Island = styled.div`
  width: 64px;
  height: 18px;
  flex: none;
  margin-left: 57px;
  border-radius: 9px;
  background: #000;
`;
const Brand = styled.div`
  font: 300 15px/20px ${mobile};
  color: #d0171b;
  margin-top: 46px;
  letter-spacing: -0.2px;
`;
const Heading = styled.div`
  font: 500 16px/20px ${mobile};
  color: ${c.ink};
  margin-top: 14px;
  letter-spacing: 0.05px;
`;
const Small = styled.div`
  font: 400 7px/10px ${mobile};
  color: ${c.dim};
  margin-top: ${(p) => p.$top || 0}px;
  letter-spacing: ${(p) => p.$track || 0}px;
  text-align: ${(p) => p.$align || "left"};
  white-space: nowrap;
`;
const Field = styled.div`
  height: 29px;
  flex: none;
  margin-top: ${(p) => p.$top}px;
  border-radius: 15px;
  background: #f1f4f8;
  position: relative;
  display: flex;
  align-items: center;
  justify-content: space-between;
  padding: 0 4px 0 8px;
`;
const FieldLabel = styled.span`
  position: absolute;
  left: 8px;
  top: -4px;
  font: 400 5.300px/8px ${mobile};
  color: ${c.dim};
`;
const Submit = styled.div`
  width: 75px;
  height: 26px;
  flex: none;
  align-self: flex-end;
  margin-top: 12px;
  border-radius: 13px;
  background: #cd181a;
  color: #fff;
  font: 700 9.700px/25px ${mobile};
  text-align: center;
`;
const Socials = styled.div`
  display: flex;
  justify-content: center;
  gap: 8px;
  margin-top: 8px;
`;
const Social = styled.div`
  width: 22px;
  height: 22px;
  border: 1px solid #e6eaee;
  border-radius: 6px;
  display: grid;
  place-items: center;
  color: ${c.ink};
`;
const LoginLine = styled.div`
  display: flex;
  align-items: center;
  justify-content: center;
  gap: 4px;
  margin-top: 20px;
`;
const LoginLink = styled.span`
  font: 400 8.500px/12px ${mobile};
  color: #5a49f0;
  letter-spacing: -0.1px;
`;

function CanvasArea() {
  return (
    <Canvas>
      <CanvasBar>
        <Chunk $w={36}><Draw w={16} h={16}><path d="M2.500 0v16" strokeWidth="4" strokeLinecap="butt" /><path d="M14 4l-4 4 4 4" strokeWidth="2.200" /></Draw></Chunk>
        <Chunk $w={104} $spread="space-between" $pad={8}>
          <Draw w={12} h={12} color="#c5ccd3" sw={1.8}><path d="M.9 6h10.200" /></Draw>
          <Label $size={16.5} $weight={900} $color="#fff">50%</Label>
          <Draw w={12} h={12} color="#c5ccd3" sw={1.8}><path d="M.9 6h10.200M6 .9v10.200" /></Draw>
        </Chunk>
        <GlowButton><Draw w={19} h={19} color="#fff" sw={1.5}><path d="M4.500 1.500H18l-2 5H2.500zM4.500 1.500L7 6.500M2.500 7l1 2.500h4M3.500 11.500L1.500 15l3 2.500 1.500-3zM5 11l2-1M10 9.500l7 7M16.500 9.500l-5.500 6-2 2M10.500 16h1M13 9.500l-2 2M17.500 13.500l-2 2" /></Draw></GlowButton>
        <Grow />
        <Chunk $w={190}>
          <ToolCell><Draw w={20} h={20}><circle cx="10" cy="10" r="4" fill={c.grey} /><path d="M10 1.500v1.500M10 17v1.500M1.500 10H3M17 10h1.500M4 4l1 1M15 15l1 1M16 4l-1 1M5 15l-1 1" /></Draw></ToolCell>
          <ToolCell><Draw w={14} h={21} color={c.orange}><rect x="1" y="1" width="12" height="19" rx="2" /><path d="M1.500 17.500h11v1.500h-11z" fill={c.orange} /></Draw></ToolCell>
          <ToolCell><Draw w={16} h={20} sw={1.4}><path d="M6 19H2.500L1 17.500v-15L2.500 1h11L15 2.500V7M6 19v-8.500h9V19H6M9.500 19v-4.500h3V19" /></Draw></ToolCell>
          <ToolCell><MdKeyboard size={22} color={c.grey} /></ToolCell>
          <ToolCell><Draw w={18} h={16} sw={2.4}><path d="M7 2.500h10M12 3v12M1.500 7h6.500M4.500 7.500V14.500" strokeLinecap="butt" /></Draw></ToolCell>
        </Chunk>
        <Chunk $w={36}>
          <Draw w={19} h={20} sw={1.4}><circle cx="2.800" cy="2.800" r="1.700" /><circle cx="15" cy="2.800" r="1.700" /><circle cx="2.800" cy="16.500" r="1.700" /><path d="M5 2.800h7.500M2.800 5v9M15 5v3M5 16.500h2" /><circle cx="13" cy="15" r="2.400" strokeWidth="2.400" /><path d="M13 10.800v1M13 18.200v1M8.800 15h1M16.200 15h1M10 12l.8.8M15.200 17.200l.8.8M16 12l-.8.8M10.800 17.200l-.8.8" strokeWidth="1.800" /></Draw>
        </Chunk>
      </CanvasBar>
      <Stage>
        <Phone>
          <Island />
          <Brand>FM</Brand>
          <Heading>Iniciar</Heading>
          <Small $top={2} $track={-0.05}>Crie uma conta usando o formulário abaixo.</Small>
          <Field $top={15}><FieldLabel>Endereço de Email</FieldLabel><Small>Digite seu email aqui...</Small></Field>
          <Field $top={8}><FieldLabel>Senha</FieldLabel><Small>Digite sua senha aqui...</Small><MdOutlineVisibilityOff size={12} color={c.dim} /></Field>
          <Field $top={8}><FieldLabel>Confirmar Senha</FieldLabel><Small>Digite sua senha novamente</Small><MdOutlineVisibilityOff size={12} color={c.dim} /></Field>
          <Submit>Criar</Submit>
          <Small $align="center" $top={11}>Use a social platform to continue</Small>
          <Socials>
            <Social><Draw w={8} color={c.ink} sw={1.5}><path d="M6.500 1.900A3 3 0 107 4.300H4.300" strokeLinecap="butt" /></Draw></Social>
            <Social><MdPhone size={10} /></Social>
          </Socials>
          <LoginLine><Small>Já tem conta?</Small><LoginLink>Login</LoginLink></LoginLine>
        </Phone>
        <SideButtons>
          <SideButton><Draw w={16} h={7} color="#fff"><rect x="1" y="1" width="14" height="5" rx=".5" /><path d="M3.500 3.500h1M12 3.500h1" strokeWidth="2" /></Draw></SideButton>
          <SideButton><Draw w={16} h={13} color="#fff"><rect x="1" y="1" width="14" height="11" rx=".5" /><path d="M3.500 9.500h9" strokeWidth="2" /></Draw></SideButton>
        </SideButtons>
      </Stage>
    </Canvas>
  );
}

/* ---------- properties ---------- */
const Props = styled.aside`
  width: 301px;
  flex: none;
  border-left: 1px solid #171c1f;
  background: ${c.ink};
  display: flex;
  flex-direction: column;
`;
const FoldRow = styled.div`
  height: 41px;
  flex: none;
  padding: 2px 15px 0;
  display: flex;
  align-items: center;
  gap: 9px;
  background: ${c.panel};
  border-bottom: 2px solid ${c.line};
`;
const Section = styled.section`
  padding: 0 12px;
  flex: none;
  border-bottom: ${(p) => (p.$last ? 0 : 2)}px solid ${c.line};
  height: ${(p) => p.$h}px;
`;
const Line = styled.div`
  height: ${(p) => p.$h}px;
  margin-top: ${(p) => p.$top || 0}px;
  padding-top: ${(p) => p.$drop || 0}px;
  padding-left: ${(p) => p.$pad || 0}px;
  display: flex;
  align-items: center;
  gap: ${(p) => p.$gap ?? 6}px;
`;
const Push = styled.div`
  margin-left: auto;
  margin-right: ${(p) => p.$r ?? 2}px;
`;
const Input = styled.div`
  width: ${(p) => p.$w}px;
  height: ${(p) => p.$h || 33}px;
  border: 1px solid ${c.edge};
  border-radius: 8px;
  background: ${(p) => p.$bg || "#0b0f13"};
  display: flex;
  align-items: center;
  padding-left: ${(p) => p.$pad || 9}px;
  padding-top: 1px;
`;
const Modes = styled.div`
  height: 36px;
  margin-top: 10px;
  border: 2px solid ${c.panel};
  border-radius: 8px;
  background: ${c.panel};
  display: flex;
`;
const Mode = styled.div`
  width: ${(p) => (p.$on ? 51 : 55.5)}px;
  margin-right: ${(p) => (p.$on ? 2 : 0)}px;
  flex: none;
  border-radius: 6px;
  display: grid;
  place-items: center;
  background: ${(p) => (p.$on ? "#101315" : "transparent")};
`;
const Track = styled.div`
  width: 170px;
  height: 5px;
  margin: 0 8px 0 6px;
  border-radius: 3px;
  background: ${c.violet};
  display: flex;
  align-items: center;
  justify-content: flex-end;
`;
const Knob = styled.div`
  width: 12px;
  height: 12px;
  border-radius: 50%;
  background: #fff;
`;
const Chip = styled.div`
  width: 132px;
  height: 32px;
  border: 1px solid ${c.edge};
  border-radius: 8px;
  display: flex;
  align-items: center;
  padding-left: 8px;
`;
const Swatch = styled.div`
  width: 12px;
  height: 12px;
  border-radius: 3px;
  background: #fff;
`;
const ChipText = styled.div`
  width: 70px;
  margin: 0 7px 0 12px;
  font: 700 12px/15px ${app};
  letter-spacing: -0.1px;
  color: #fff;
`;
const Toggle = styled.div`
  width: 42px;
  height: 25px;
  border-radius: 13px;
  background: ${(p) => (p.$on ? "#4740e0" : "#101417")};
  border: 1px solid ${(p) => (p.$on ? "#4740e0" : "#262d34")};
  display: flex;
  align-items: center;
  justify-content: ${(p) => (p.$on ? "flex-end" : "flex-start")};
`;
const ToggleKnob = styled.div`
  width: 22px;
  height: 22px;
  border-radius: 50%;
  background: #fff;
`;
const Fab = styled.div`
  position: absolute;
  left: 1292px;
  top: 660px;
  width: 48px;
  height: 48px;
  border-radius: 50%;
  background: ${c.violet};
  box-shadow: 0 2px 8px rgba(0, 0, 0, 0.25);
  display: grid;
  place-items: center;
`;

const Vars = () => (
  <Draw w={15} h={13} color="#b8704f" sw={1.5}><circle cx="3" cy="3" r="1.800" /><path d="M8 3h5.500M1 10.500h5" /><circle cx="11.500" cy="10.500" r="1.800" /></Draw>
);

function Properties() {
  return (
    <Props>
      <FoldRow><Label $size={14} $weight={700} $track={0.25}>Page Parameters</Label><Info s={14} color={c.grey} /><Push $r={0}><Draw w={16} color="#8b97a2" sw={1.4}><path d="M8 1v14M1 8h14" /></Draw></Push></FoldRow>
      <FoldRow><Label $size={14} $weight={700} $track={0.15}>Route Settings</Label><Info s={14} color={c.grey} /><Push $r={5}><Draw w={8} h={14} sw={1.7}><path d="M1 1l6 6-6 6" /></Draw></Push></FoldRow>
      <Section $h={269}>
        <Line $h={34} $gap={9} $pad={3} $drop={3}>
          <Draw w={9} h={15} color="#fff" sw={1.7}><rect x="1" y="1" width="7" height="13" rx="1" /><path d="M1.500 2h6M4 12.500h1" /></Draw>
          <Label $size={13} $weight={900} $color="#fff" $track={0.1}>Scaffold</Label>
        </Line>
        <Line $h={33} $gap={8}>
          <Input $w={195}><Label $size={14} $weight={700} $color="#fff" $track={-0.1}>signUp</Label></Input>
          <Square $w={32} $bg={c.panel}><Draw w={16} color="#fff" sw={1.4}><rect x="4" y="4" width="11" height="11" rx="2.500" /><path d="M3 12a3 3 0 01-2-3V4a3 3 0 013-3h5a3 3 0 013 2M8 7v5h1.500a2.500 2.500 0 000-5z" /></Draw></Square>
          <Push $r={0}><Square $w={32} $bg={c.panel}><Trash w={14} /></Square></Push>
        </Line>
        <Line $h={42} $top={9}><Input $w={276} $h={41} $pad={15}><Label $size={14} $color="#5a6269">Describe your page here...</Label></Input></Line>
        <Modes>
          <Mode $on><Draw w={20} color="#fff" sw={1.7}><path d="M15 1l4 4L5 19l-4-4zM12 4l2 2M9 7l2 2M6 10l2 2" /><path d="M1.500 5L5 1.500l13.500 13V19h-4zM4.500 8L8 4.500" /></Draw></Mode>
          <Mode><Draw w={20} color="#8b97a2" sw={1.4}><circle cx="3" cy="3.500" r="1.800" fill={c.grey} /><path d="M3.500 5.500v7c0 3 2 4.500 4.500 4.500h4" /><circle cx="14" cy="17" r="1.800" fill={c.grey} /><path d="M11.500 1.500l7.500 4.500-4 1.500-3.500 3zM15 7.500l2.500 3.500" /></Draw></Mode>
          <Mode><DbIcon /></Mode>
          <Mode><svg width="11" height="13" viewBox="0 0 11 13"><path d="M0 0l11 6.500L0 13z" fill={c.grey} /></svg></Mode>
          <Mode><StorageIcon /></Mode>
        </Modes>
        <Line $h={20} $top={14}><Label $size={13.5} $weight={900} $color="#fff" $track={-0.4}>Visibility</Label><Info /><Push><Chevron /></Push></Line>
        <Line $h={24} $top={3} $gap={5}><Label $size={13.5} $track={-0.1}>Opacity</Label><Info /><Vars /></Line>
        <Line $h={32} $gap={0}><Track><Knob /></Track><Input $w={92} $h={32} $pad={12} $bg="transparent"><Label $size={14} $weight={900} $color="#fff">1</Label></Input></Line>
      </Section>
      <Section $h={201}>
        <Line $h={20} $top={8} $drop={1}><Label $size={13.5} $weight={900} $color="#fff" $track={-0.19}>Page (Scaffold) Properties</Label><Info /><Push><Chevron /></Push></Line>
        <Line $h={26} $top={2} $gap={4} $drop={1}><Label $size={13.5} $track={-0.35}>Background Color</Label><Vars /></Line>
        <Chip><Swatch /><ChipText>Secondary Background</ChipText><Draw w={10} sw={1.4}><path d="M1 1l8 8M9 1L1 9" /></Draw></Chip>
        <Line $h={34} $top={4}><Label $size={13.5} $track={-0.2}>Safe Area</Label><Info /><Push $r={0}><Toggle $on><ToggleKnob /></Toggle></Push></Line>
        <Line $h={34}><Label $size={13.5} $track={-0.35}>Hide Keyboard on Tap</Label><Info /><Push $r={0}><Toggle $on><ToggleKnob /></Toggle></Push></Line>
        <Line $h={34}><Label $size={13.5} $track={-0.38}>Disable Android Back Button</Label><Info /><Push $r={0}><Toggle /></Push></Line>
      </Section>
      <Section $last $h={9} />
    </Props>
  );
}

/* ---------- taskbar ---------- */
const Taskbar = styled.footer`
  height: 40px;
  flex: none;
  background: linear-gradient(to right, #3a281f, #35271f 30%, #2f2624 55%, #302a2a 75%, #38291f);
  display: flex;
  align-items: center;
`;
const Task = styled.div`
  width: ${(p) => p.$w || 49}px;
  height: 40px;
  display: grid;
  place-items: center;
  background: ${(p) => (p.$active ? "#62544e" : "transparent")};
  border-bottom: ${(p) => (p.$open ? "2px solid #76b9ed" : "0")};
`;
const TaskTail = styled.div`
  width: 3px;
  height: 40px;
  margin-left: 1px;
  background: #54463f;
  border-bottom: 2px solid #76b9ed;
`;
const Clock = styled.div`
  margin-left: auto;
  width: 70px;
  font: 12px/18px ${ui};
  letter-spacing: -0.4px;
  color: #fff;
  text-align: center;
`;

function WindowsBar() {
  return (
    <Taskbar>
      <Task $w={48}><svg width="16" height="16" viewBox="0 0 16 16" fill="#fff"><path d="M0 2.300l6.500-.9v6.100H0zM7.300 1.300L16 0v7.500H7.300zM0 8.300h6.500v6.200L0 13.600zM7.300 8.300H16V16l-8.700-1.300z" /></svg></Task>
      <Task $w={48}><Draw w={22} color="#fff" sw={2}><circle cx="13" cy="8.500" r="7.500" /><path d="M7.500 14L1 20.500" /></Draw></Task>
      <Task $w={48}><Draw w={17} h={16} color="#fff" sw={1.2}><path d="M.8.6v2.600h9V.6M.8 15.400v-2.600h9v2.600M.8 5.500h9v5h-9zM14.500.6v4M14.500 9v6.500M13.500 6.700h2" /></Draw></Task>
      <Task $w={54}><svg width="22" height="19" viewBox="0 0 22 19"><path d="M0 1.500A1.500 1.500 0 011.500 0H8l2 2.500H0z" fill="#e0a010" /><path d="M0 2.500h21a1 1 0 011 1V17a1 1 0 01-1 1H0z" fill="#fcd462" /><path d="M4 19v-6.500a2 2 0 012-2h10a2 2 0 012 2V19h-4v-3H8v3z" fill="#3f97dd" /></svg></Task>
      <Task $w={42}><svg width="24" height="24" viewBox="0 0 24 24"><path d="M7 6V1.500h10V6" stroke="#35b5f0" strokeWidth="2" fill="none" /><path d="M.5 5h23v16a2.500 2.500 0 01-2.500 2.500H3A2.500 2.500 0 01.5 21z" fill="#f2f2f2" /><path d="M7.500 9.500h4v4h-4z" fill="#f25022" /><path d="M12.500 9.500h4v4h-4z" fill="#7fba00" /><path d="M7.500 14.500h4v4h-4z" fill="#00a4ef" /><path d="M12.500 14.500h4v4h-4z" fill="#ffb900" /></svg></Task>
      <Task $w={58}><svg width="21" height="24" viewBox="0 0 21 24"><path d="M6 0h9l2 2.500 2.500.5 1 4-2 9.500L15 20l-4.500 3.500L6 20l-3.500-3.500-2-9.500 1-4L4 2.500z" fill="#f9421d" /><path d="M5.500 5l5 .8 5-.8L18 8l-2.500 4 .5 2-4 2.500-1.500 3-1.500-3L5 14l.5-2L3 8z" fill="#fff" /><path d="M5.500 8.500L9 9.500l-1.500 2zM15.500 8.500L12 9.500l1.500 2zM8.500 14h4l-2 1.500z" fill="#f9421d" /></svg></Task>
      <Task $w={40} $open><svg width="23" height="23" viewBox="0 0 23 23"><circle cx="11.500" cy="11.500" r="10.500" fill="#d9d9d6" stroke="#8b8783" strokeWidth="1.500" /><circle cx="11.500" cy="11.500" r="8" fill="#c3c0ba" stroke="#f5f5f5" /><path d="M7.500 5.500L14 16" stroke="#c81e1e" strokeWidth="2" /><path d="M14.500 6L11 13" stroke="#f7f7f7" strokeWidth="1.500" /></svg></Task>
      <Task $w={5} />
      <Task $w={44} $open $active><Firefox s={24} /></Task>
      <TaskTail />
      <Clock>16:28<br />04/08/2024</Clock>
    </Taskbar>
  );
}

export default function App() {
  return (
    <Screen>
      <Global />
      <Browser />
      <TopHeader />
      <Work>
        <SideRail />
        <PageList />
        <CanvasArea />
        <Properties />
      </Work>
      <WindowsBar />
      <Fab>
        <Draw w={30} h={30} color="#fff" sw={2.2}><circle cx="12" cy="12" r="10.500" /><path d="M7 14.500c2.500 2.500 7.500 2.500 10 0" strokeWidth="1.600" /><path d="M20 20.500l6.500 6" strokeWidth="4" /></Draw>
      </Fab>
    </Screen>
  );
}
